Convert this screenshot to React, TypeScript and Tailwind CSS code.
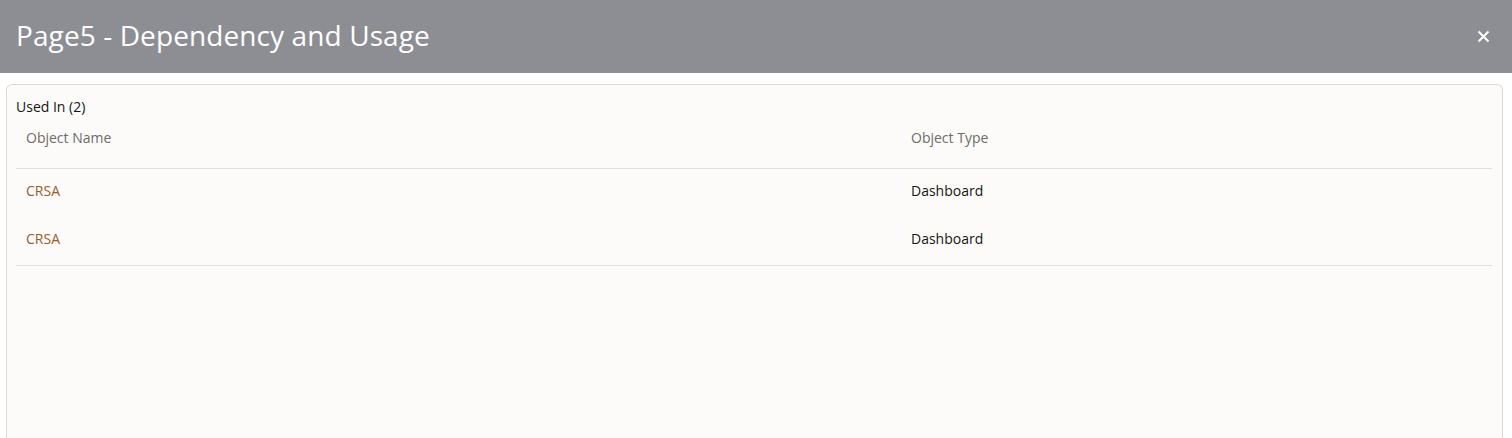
import React from "react";

const rows = [
  { name: "CRSA", type: "Dashboard" },
  { name: "CRSA", type: "Dashboard" },
];

export default function App() {
  return (
    <div
      className="w-[1512px] h-[438px] bg-white overflow-hidden flex flex-col"
      style={{ fontFamily: '"Open Sans", "Noto Sans", sans-serif' }}
    >
      <div className="h-[73px] shrink-0 bg-[#8d8e93] flex items-center justify-between pl-[16px] pr-[22px]">
        <h1 className="text-[28px] leading-none text-white font-normal tracking-[0.1px] mb-[3px]">
          Page5 - Dependency and Usage
        </h1>
        <svg width="13" height="13" viewBox="0 0 13 13" className="mb-[1px]">
          <path d="M1.5 1.5 L11.5 11.5 M11.5 1.5 L1.5 11.5" stroke="#ffffff" strokeWidth="2" strokeLinecap="butt" />
        </svg>
      </div>
      <div className="flex-1 pt-[11px] pl-[6px] pr-[9px]">
        <div className="h-full rounded-t-[6px] border border-b-0 border-[#dcd8d4] bg-[#fcfbfa] pt-[12px] pl-[9px] pr-[10px]">
          <div className="text-[14px] leading-5 text-[#161513]">Used In (2)</div>
          <div className="flex border-b border-[#e3e0dc] pt-[11px] pb-[20px] text-[14px] leading-5 text-[#6f6b68]">
            <div className="w-[885px] pl-[10px]">Object Name</div>
            <div className="flex-1 pl-[10px]">Object Type</div>
          </div>
          <div className="border-b border-[#e3e0dc]">
            {rows.map((r, i) => (
              <div key={i} className="flex pt-[12px] pb-[16px] text-[14px] leading-5">
                <div className="w-[885px] pl-[10px] text-[#9a5a2c]">{r.name}</div>
                <div className="flex-1 pl-[10px] text-[#161513]">{r.type}</div>
              </div>
            ))}
          </div>
        </div>
      </div>
    </div>
  );
}
